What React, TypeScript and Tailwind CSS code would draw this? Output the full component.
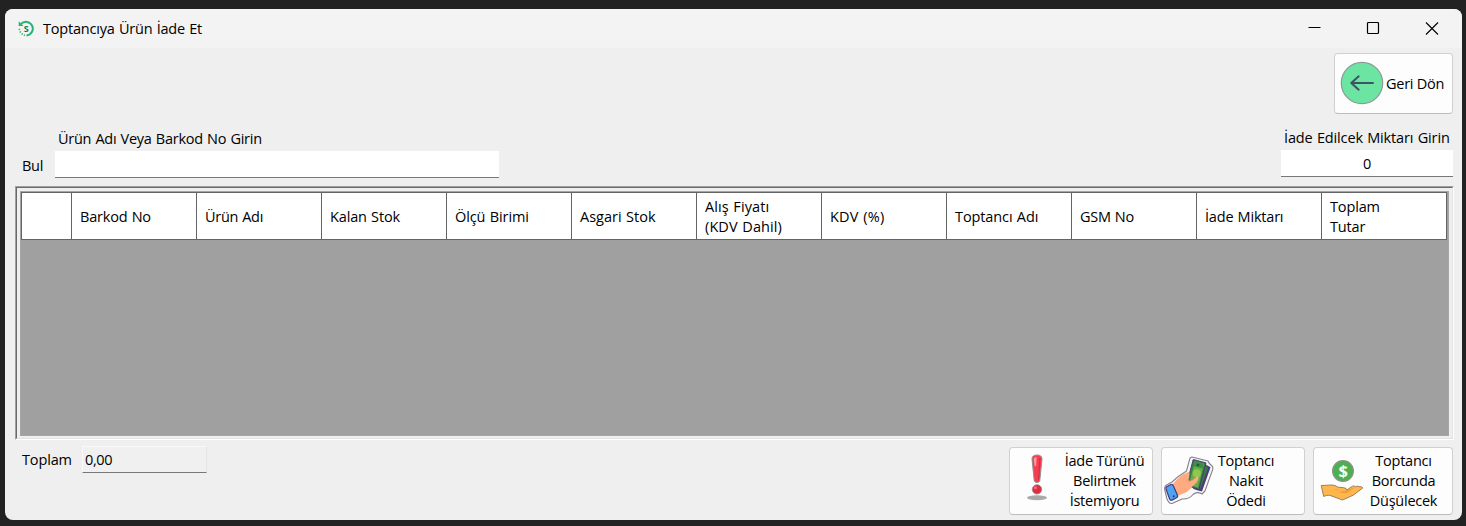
import type { ReactNode } from "react";

const columns: { lines: string[]; spacing: string }[] = [
  { lines: ["Barkod No"], spacing: "tracking-[-0.2px]" },
  { lines: ["Ürün Adı"], spacing: "tracking-[-0.3px]" },
  { lines: ["Kalan Stok"], spacing: "tracking-[-0.15px]" },
  { lines: ["Ölçü Birimi"], spacing: "tracking-[-0.1px]" },
  { lines: ["Asgari Stok"], spacing: "tracking-[0px]" },
  { lines: ["Alış Fiyatı", "(KDV Dahil)"], spacing: "tracking-[0.1px]" },
  { lines: ["KDV (%)"], spacing: "tracking-[0.2px]" },
  { lines: ["Toptancı Adı"], spacing: "tracking-[-0.1px]" },
  { lines: ["GSM No"], spacing: "tracking-[-0.3px]" },
  { lines: ["İade Miktarı"], spacing: "tracking-[-0.2px]" },
  { lines: ["Toplam", "Tutar"], spacing: "tracking-[-0.15px]" },
];

function AppIcon() {
  return (
    <svg width="18" height="18" viewBox="0 0 18 18" fill="none">
      <path d="M4 4A6.8 6.8 0 1 1 9.5 15.4" stroke="#27b376" strokeWidth="2" />
      <path d="M8 15.3A7 7 0 0 1 2.4 8" stroke="#27b376" strokeWidth="1.6" strokeDasharray="1.2 1.4" />
      <path d="M1.7 1.3v4.6h4.8z" fill="#27b376" />
      <text x="9.2" y="12" textAnchor="middle" fontFamily="Open Sans, sans-serif" fontSize="9" fontWeight="700" fill="#16774c">S</text>
    </svg>
  );
}

function BackIcon() {
  return (
    <svg width="44" height="44" viewBox="0 0 44 44" fill="none">
      <circle cx="22" cy="22" r="20.7" fill="#6ce4a2" stroke="#8c9b92" strokeWidth="1.2" />
      <path d="M33 22H11.5M18.7 15.3 11.3 22l7.4 6.7" stroke="#3c5368" strokeWidth="2" strokeLinecap="round" strokeLinejoin="round" />
    </svg>
  );
}

function AlertIcon() {
  return (
    <svg width="24" height="48" viewBox="0 0 24 48">
      <ellipse cx="12" cy="43.8" rx="10" ry="2.5" fill="#a9a9ab" />
      <path d="M7 5Q7 1 12 1t5 4L14.8 26.5q-.3 2-2.8 2t-2.8-2z" fill="#f63d50" stroke="#929095" strokeWidth="1" />
      <path d="M8.8 4.7q1.2-2 2.7-1.8l-.3 9q-1.6.9-1.7-.7z" fill="#ff9ca5" />
      <path d="M15 4 13.6 25.5" stroke="#d72f44" strokeWidth="1.2" />
      <circle cx="12" cy="35.4" r="4.7" fill="#df2c42" stroke="#929095" strokeWidth=".8" />
      <circle cx="10.4" cy="33.8" r="1.5" fill="#ff6c7b" />
    </svg>
  );
}

function CashIcon() {
  return (
    <svg width="50" height="50" viewBox="0 0 50 50" strokeLinejoin="round">
      <path d="m28 2 16 4q1 3 4.5 5.5.8 2-.2 4L41 36l-3 3q-5-3-9 .5-4 5-11 4.5L8 48.5q-3 .5-5-4.5L.8 35q-.8-4 2.7-5.4L8 27q6-6 14.5-11l3.5-13z" fill="#f8f8fb" stroke="#838389" strokeWidth="1.1" />
      <path d="m39 8 7.5 4.2-1 3L38 36.5l-5-1.2-4-1.5z" fill="#4e397d" />
      <path d="m41 10 3 3-7.5 20.5-3 .8z" fill="#347d3a" />
      <path d="m29.2 4.5 12.8 3.4-7 26.6-12.6-4.3z" fill="#328344" stroke="#4e397d" strokeWidth="1" />
      <path d="m31 6.3 9 2.5-6 24-9-3.1z" fill="#67ad48" />
      <path d="m31.2 6.5 8.5 2.3-1.2 4.7-8.6-2.3z" fill="#3c8c45" />
      <circle cx="32.8" cy="18.2" r="4" fill="#90c84f" />
      <circle cx="34" cy="10" r="1.3" fill="#165f34" />
      <path d="M8.5 29.5q6-7.5 11-10.5l5-2q1.5.2 1 2.2l-1 5.8q1.5 2 4 0l4-3.2q3-1 1.8 2.2-1 3.7-5.8 7.2-4 5.4-9 7.3l-8.5 3.2q-4-4-2.5-12.2z" fill="#ffab82" />
      <path d="m22 25 2.5 2q4.5-1.5 8-4.5" fill="none" stroke="#f28c72" strokeWidth=".7" />
      <path d="m3 31.5 4-2q1.8-.4 2.4 1.5l4 9q.8 2-1 2.8l-3.9 2.1q-2.2 1-3-1.2L2 34q-.5-1.8 1-2.5z" fill="#4ca4f2" stroke="#493580" strokeWidth="1.2" />
      <circle cx="9.7" cy="41.2" r="1" fill="#263577" />
    </svg>
  );
}

function DebtIcon() {
  return (
    <svg width="44" height="42" viewBox="0 0 44 42">
      <circle cx="23" cy="11" r="10.4" fill="#4caf50" stroke="#8c9286" strokeWidth="1.2" />
      <text x="23" y="17" textAnchor="middle" fontFamily="Open Sans, sans-serif" fontSize="16.5" fontWeight="700" fill="#f3fff2">$</text>
      <path d="M1.2 25.5q6-.2 10.8-.5 3 0 6 2.2l5.5.5q3.5.2 3 2.5l6-4q2-.8 3 .6 2.5-1.5 3.5 0 3.5-.6 3.8 1.2L33 35.3 22.5 40 9.5 35.2q-3 0-5.8 1.2z" fill="#ffb74d" stroke="#99815c" strokeWidth="1" strokeLinejoin="round" />
      <path d="M13 29q5 0 7 2 4 .5 6.5-.8l9-3.2-9 6.2-8.5-.8q3 0 3.5-1z" fill="#f39b38" />
    </svg>
  );
}

function ActionButton({ icon, lines, size, iconBox, textBox }: { icon: ReactNode; lines: string[]; size: string; iconBox: string; textBox: string }) {
  return (
    <button className={`flex h-[68px] shrink-0 rounded-[4px] border border-[#d0d0d0] border-b-[#bcbcbc] bg-[#fdfdfd] ${size}`}>
      <span className={`shrink-0 ${iconBox}`}>{icon}</span>
      <span className={`text-center leading-5 whitespace-nowrap ${textBox}`}>
        {lines.map((line) => <span className="block" key={line}>{line}</span>)}
      </span>
    </button>
  );
}

export default function App() {
  return (
    <div className="h-[526px] w-[1466px] overflow-hidden bg-[#222222] pt-[9px] pl-[5px] font-['Open_Sans','Noto_Sans',sans-serif] text-[14.5px] tracking-[-0.25px] text-black [word-spacing:0.7px]">
      <main className="flex h-[511px] w-[1457px] flex-col overflow-hidden rounded-lg bg-[#efefef]">
        <header className="flex h-[39px] shrink-0 items-center bg-[#f3f3f3] pl-3">
          <AppIcon />
          <h1 className="ml-2 flex-1 leading-5 tracking-[-0.2px]">Toptancıya Ürün İade Et</h1>
          <div className="flex items-center gap-[45px] pr-[23px]">
            <svg width="14" height="14" viewBox="0 0 14 14"><path d="M1.5 5.5h12" stroke="black" /></svg>
            <svg width="14" height="14" viewBox="0 0 14 14"><rect x="1.5" y="0.5" width="11" height="11" rx="1" fill="none" stroke="black" strokeWidth="1.2" /></svg>
            <svg width="14" height="14" viewBox="0 0 14 14"><path d="m1 .5 12 12M13 .5 1 12.5" stroke="black" strokeWidth="1.1" /></svg>
          </div>
        </header>

        <div className="flex h-[66px] shrink-0 justify-end pt-[5px] pr-[9px]">
          <button className="flex h-[61px] w-[119px] items-center rounded-[4px] border border-[#d0d0d0] border-b-[#bcbcbc] bg-[#fdfdfd] pl-[5px]">
            <span className="pb-[2px]"><BackIcon /></span>
            <span className="ml-[2px] whitespace-nowrap">Geri Dön</span>
          </button>
        </div>

        <div className="flex h-[72px] shrink-0 justify-between pr-[9px] pl-[17px]">
          <div className="flex pt-[15px]">
            <span className="w-[33px] pt-[27px] leading-5">Bul</span>
            <label className="flex flex-col">
              <span className="h-[22px] pl-[3px] leading-5 tracking-[-0.26px]">Ürün Adı Veya Barkod No Girin</span>
              <input className="h-[27px] w-[444px] border-b border-[#777777] bg-white px-1 outline-none" />
            </label>
          </div>
          <label className="flex w-[172px] flex-col pt-[14px]">
            <span className="h-[22px] pl-[3px] leading-5 tracking-[-0.14px] whitespace-nowrap">İade Edilcek Miktarı Girin</span>
            <input defaultValue="0" className="h-[27px] border-b border-[#777777] bg-white text-center outline-none" />
          </label>
        </div>

        <section className="ml-[10px] h-[254px] w-[1439px] shrink-0 border border-t-[#a0a0a0] border-r-white border-b-white border-l-[#a0a0a0]">
          <div className="h-full border border-t-[#696969] border-r-[#e3e3e3] border-b-[#e3e3e3] border-l-[#696969] p-[3px]">
            <div className="h-[245px] w-[1429px] border border-[#a5a5a8] bg-[#a0a0a0]">
              <div className="flex h-12 w-[1426px] border border-[#646464] bg-white">
                <div className="w-[50px] shrink-0 border-r border-[#646464]" />
                {columns.map(({ lines, spacing }) => (
                  <div className={`flex w-[125px] shrink-0 flex-col justify-center border-r border-[#646464] pt-[2px] pl-2 leading-5 last:w-[124px] last:border-r-0 ${spacing}`} key={lines[0]}>
                    {lines.map((line) => <span key={line}>{line}</span>)}
                  </div>
                ))}
              </div>
            </div>
          </div>
        </section>

        <footer className="flex flex-1 justify-between pr-[9px] pl-[17px]">
          <label className="mt-[6px] flex h-[27px]">
            <span className="w-[60px] pt-[4px] leading-5 tracking-[-0.15px]">Toplam</span>
            <input readOnly defaultValue="0,00" className="h-[27px] w-[125px] border border-[#f9f9f9] border-r-[#e2e2e2] border-b-[#777777] bg-[#f0f0f0] pl-[2px] tracking-[-0.4px] outline-none" />
          </label>
          <div className="flex gap-2 pt-[7px]">
            <ActionButton icon={<AlertIcon />} lines={["İade Türünü", "Belirtmek", "İstemiyoru"]} size="w-[144px]" iconBox="w-[47px] pl-[15px] pt-[6px]" textBox="w-[96px] pt-[3px]" />
            <ActionButton icon={<CashIcon />} lines={["Toptancı", "Nakit", "Ödedi"]} size="w-[144px]" iconBox="w-[52px] pl-[2px] pt-[7px]" textBox="w-[64px] pt-[3px]" />
            <ActionButton icon={<DebtIcon />} lines={["Toptancı", "Borcunda", "Düşülecek"]} size="w-[140px]" iconBox="w-[52px] pl-[6px] pt-[12px]" textBox="w-[75px] pt-[3px]" />
          </div>
        </footer>
      </main>
    </div>
  );
}
